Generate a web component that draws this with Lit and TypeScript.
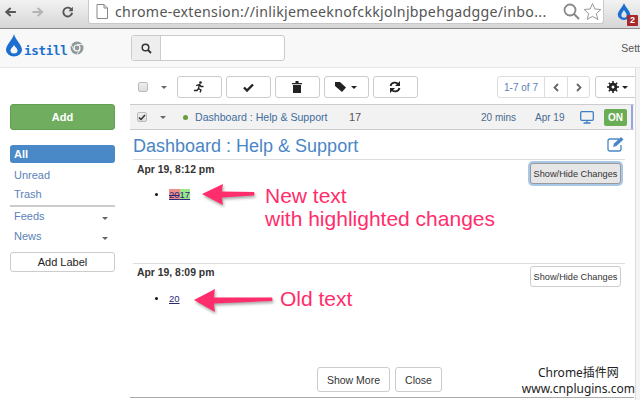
import { LitElement, html, css } from "lit";
import { customElement } from "lit/decorators.js";

const caret = html`<span class="caret"></span>`;

@customElement("app-root")
export class AppRoot extends LitElement {
  static styles = css`
    :host { display: block; position: relative; width: 640px; height: 400px; overflow: hidden; background: #fff;
      font-family: "Liberation Sans", Arial, sans-serif; font-size: 11px; color: #333; }
    * { box-sizing: border-box; }
    svg { display: block; }

    .browser { height: 29px; display: flex; background: linear-gradient(#f2f2f2, #d6d6d6); border-bottom: 1px solid #8a8a8a; align-items: flex-start; }
    .nav { width: 88px; display: flex; padding: 3px 0 0 4px; flex: none; }
    .nav svg { margin-right: 14px; }
    .nav svg:nth-child(2) { margin-right: 16px; }
    .omni { width: 516px; height: 24px; background: #fff; border: 1px solid #c8c8c8; border-top: 0; border-radius: 0 0 3px 3px; display: flex; align-items: center; padding: 0 0 0 7px; flex: none; }
    .url { font-family: "Noto Sans", sans-serif; font-size: 14.2px; color: #555; margin-left: 7px; width: 434px; white-space: nowrap; overflow: hidden; letter-spacing: 0.02em; }
    .omni .mag { margin-left: 14px; }
    .omni .star { margin-left: 3px; }
    .ext { margin: 1px 0 0 12px; position: relative; }
    .badge { position: absolute; left: 11px; top: 14px; width: 11px; height: 11px; background: #a8282c; color: #fff; font: bold 9px/11px "Liberation Sans", sans-serif; text-align: center; border-radius: 1px; }

    .top { height: 39px; background: #f8f8f8; border-bottom: 1px solid #e7e7e7; display: flex; align-items: center; position: relative; }
    .logo { width: 131px; padding-left: 5px; display: flex; align-items: center; flex: none; height: 100%; }
    .drop { margin-top: -6px; }
    .logo-text { font: bold 12.5px "DejaVu Sans Mono", "Liberation Mono", monospace; color: #1a6fd0; margin: 5px 0 0 1px; letter-spacing: -0.3px; width: 46px; }
    .search { width: 154px; height: 26px; display: flex; border: 1px solid #ccc; border-radius: 3px; background: #fff; flex: none; }
    .search .addon { width: 29px; background: #eee; border-right: 1px solid #ccc; display: flex; align-items: center; justify-content: center; border-radius: 3px 0 0 3px; }
    .set { margin-left: auto; white-space: nowrap; color: #555; font-size: 10.5px; }

    .body { display: grid; grid-template-columns: 130px 510px; height: 332px; }
    .side { padding: 36px 15px 0 10px; }
    .btn-add { height: 26px; background: #70ad5e; border: 1px solid #62a04f; border-radius: 3px; color: #fff; font-weight: bold; font-size: 11px; display: flex; align-items: center; justify-content: center; }
    .nav-list { margin-top: 15px; }
    .pill { height: 18px; background: #4a89c8; color: #fff; font-weight: bold; border-radius: 3px; padding-left: 4px; display: flex; align-items: center; }
    .link { height: 19px; color: #5b82b8; padding-left: 4px; display: flex; align-items: center; justify-content: space-between; padding-right: 7px; }
    .first { margin-top: 2px; }
    .side hr { border: 0; height: 2px; background: #ccc; margin: 2px 0 0; }
    .lab { height: 20px; align-items: flex-start; padding-top: 3px; }
    .lab .caret { margin-top: 7px; }
    .btn-label { margin-top: 5px; height: 20px; border: 1px solid #ccc; border-radius: 3px; color: #222; display: flex; align-items: center; justify-content: center; background: #fff; }

    .caret { display: inline-block; width: 0; height: 0; border-left: 3.5px solid transparent; border-right: 3.5px solid transparent; border-top: 3.5px solid #666; }
    .main { position: relative; height: 332px; }
    .tools { height: 22px; margin-top: 8px; display: flex; align-items: center; padding-left: 8px; }
    .cb { width: 10px; height: 10px; border: 1px solid #bbb; border-radius: 2px; background: linear-gradient(#eee, #ddd); display: flex; align-items: center; justify-content: center; flex: none; }
    .tools > .caret { margin: 0 10px 0 13px; }
    .tb { width: 44.5px; height: 22px; border: 1px solid #ccc; border-radius: 3px; background: #fff; display: flex; align-items: center; justify-content: center; gap: 3px; margin-right: 4.5px; flex: none; }
    .tb .caret { border-top-color: #222; }
    .pager { margin-left: 75px; height: 22px; display: flex; border: 1px solid #ddd; border-radius: 3px; color: #5b82b8; font-size: 10px; margin-right: 5px; flex: none; }
    .pager .info { width: 47px; display: flex; align-items: center; justify-content: center; border-right: 1px solid #ddd; }
    .pager .pg { width: 22px; display: flex; align-items: center; justify-content: center; }
    .pager .pg + .pg { border-left: 1px solid #ddd; }

    .row { margin-top: 6px; height: 26px; width: 504px; background: #f2f2f2; border-top: 1px solid #ccc; border-bottom: 1px solid #ccc; display: flex; align-items: center; padding-left: 7px; position: relative; color: #4a6a90; font-size: 10.5px; }
    .row .caret { margin-left: 13px; }
    .dot { width: 5px; height: 5px; border-radius: 50%; background: #6a9a3e; margin-left: 17px; flex: none; }
    .name { margin-left: 7px; width: 154px; font-size: 10.6px; color: #3f6d9c; white-space: nowrap; }
    .count { font-size: 11px; width: 132px; color: #555; }
    .mins { font-size: 10px; width: 54px; }
    .date { font-size: 10px; width: 45px; }
    .on { width: 23px; height: 17px; background: #6aad55; color: #fff; font-weight: bold; font-size: 10px; display: flex; align-items: center; justify-content: center; border-radius: 2px; margin-left: 10px; }
    .stripe { position: absolute; right: 1px; top: 0; bottom: 0; width: 2px; background: #98a4e8; }

    .title { margin-left: 3px; width: 492px; height: 30px; border-bottom: 1px solid #ddd; padding-top: 3px; display: flex; align-items: center; justify-content: space-between; }
    .title h1 { margin: 0; font-weight: normal; font-size: 18px; color: #4a86c5; }
    .title svg { margin-top: -4px; }
    .entry { margin-left: 3px; width: 492px; position: relative; }
    .e1 { height: 104px; border-bottom: 1px solid #ddd; }
    .e2 { height: 103px; }
    .head { display: flex; justify-content: space-between; align-items: flex-start; padding: 3px 4px 0 4px; }
    .head b { color: #333; font-size: 10.4px; margin-top: 1px; }
    .shb { width: 91px; height: 21px; border: 1px solid #ccc; border-radius: 3px; background: #fff; font-size: 9.2px; color: #333; display: flex; align-items: center; justify-content: center; white-space: nowrap; }
    .e2 .head { padding-top: 2px; }
    .shb.focus { background: #e6e6e6; border-color: #999; box-shadow: 0 0 0 2px #a9c8e8; }
    ul { margin: 0; padding: 0; list-style: none; }
    .li { display: flex; align-items: center; margin-top: 5px; padding-left: 22px; font-size: 9.5px; }
    .e2 .li { margin-top: 6px; }
    .li::before { content: ""; width: 3px; height: 3px; background: #111; border-radius: 50%; margin-right: 11px; }
    .val { color: #2b2a7a; text-decoration: underline; display: flex; }
    .del { background: #f0908a; text-decoration: line-through; }
    .ins { background: #9be88a; }
    .foot { display: flex; padding-left: 187px; gap: 5px; }
    .foot div { height: 25px; border: 1px solid #ccc; border-radius: 3px; display: flex; align-items: center; justify-content: center; background: #fff; color: #333; font-size: 10.5px; }
    .more { width: 73px; }
    .close { width: 47px; }
    .baseline { position: absolute; left: 0; top: 329px; width: 504px; height: 1px; background: #aaa; }

    .note { position: absolute; color: #ff2d6b; font-size: 21px; line-height: 23px; white-space: nowrap; }
    .n1 { left: 132px; top: 24px; }
    .n2 { left: 147px; top: 23px; }
    .arrow { position: absolute; }
    .a1 { left: 67px; top: 18px; }
    .a2 { left: 58px; top: 19px; }
    .pink { fill: #ff2d6b; filter: drop-shadow(1px 2px 1.5px rgba(0,0,0,.35)); }
    .water { position: absolute; right: 5px; top: 365px; text-align: center; color: #222; font-family: "Noto Sans", "Noto Sans CJK SC", sans-serif; font-size: 12px; line-height: 16px; white-space: nowrap; }
    .scroll { position: absolute; right: 0; top: 68px; bottom: 0; width: 5px; background: #f4f4f4; border-left: 1px solid #ddd; }
  `;

  render() {
    return html`
      <div class="browser">
        <div class="nav">
          <svg width="18" height="18" viewBox="0 0 18 18"><path d="M16 9H4M9 3.500 3 9l6 5.500" fill="none" stroke="#555" stroke-width="2.600"/></svg>
          <svg width="18" height="18" viewBox="0 0 18 18"><path d="M2 9h12M9 3.500 15 9l-6 5.500" fill="none" stroke="#b4b4b4" stroke-width="2.600"/></svg>
          <svg width="18" height="18" viewBox="0 0 18 18"><path d="M14.500 6.500A6 6 0 1 0 15 10" fill="none" stroke="#555" stroke-width="2.600"/><path d="M16 2v6h-6z" fill="#555"/></svg>
        </div>
        <div class="omni">
          <svg width="12" height="15" viewBox="0 0 12 15"><path d="M1 .5h7l3.500 3.500v10.500H1zM8 .5V4h3.500" fill="#fff" stroke="#888"/></svg>
          <div class="url">chrome-extension://inlikjemeeknofckkjolnjbpehgadgge/inbo...</div>
          <svg class="mag" width="17" height="17" viewBox="0 0 17 17"><circle cx="7" cy="7" r="5.500" fill="none" stroke="#888" stroke-width="1.800"/><path d="m11 11 5 5" stroke="#888" stroke-width="2"/></svg>
          <svg class="star" width="19" height="19" viewBox="0 0 19 19"><path d="m9.500 1.500 2.400 5.500 6 .5-4.600 4 1.500 6-5.300-3.200-5.300 3.200 1.500-6-4.600-4 6-.5z" fill="#fff" stroke="#999"/></svg>
        </div>
        <div class="ext">
          <svg width="16" height="20" viewBox="0 0 18 20"><path d="M9 1C8 5 2 10 2 14a7 6 0 0 0 14 0C16 10 10 5 9 1Zm0 8c1 2 3 4 3 5.500a3 3 0 0 1-6 0C6 13 8 11 9 9Z" fill="#1a6fd0" fill-rule="evenodd"/></svg>
          <div class="badge">2</div>
        </div>
      </div>

      <div class="top">
        <div class="logo">
          <svg class="drop" width="18" height="24" viewBox="0 0 18 24"><path d="M9 1C8 6 1 12 1 17a8 6.500 0 0 0 16 0C17 12 10 6 9 1Zm0 11c1 2 3.500 3.500 3.500 5.500a3.500 3 0 0 1-7 0C5.500 15.500 8 14 9 12Z" fill="#1a6fd0" fill-rule="evenodd"/></svg>
          <span class="logo-text">istill</span>
          <svg width="14" height="14" viewBox="0 0 14 14"><circle cx="7" cy="7" r="6.500" fill="#8f9a9a"/><circle cx="7" cy="7" r="3.500" fill="#fff"/><circle cx="7" cy="7" r="2.400" fill="#8f9a9a"/><path d="M7 3.500H13M4 8.800 1.200 3.800M9.800 9 6.800 13.300" stroke="#fff" stroke-width=".8"/></svg>
        </div>
        <div class="search">
          <div class="addon"><svg width="11" height="11" viewBox="0 0 11 11"><circle cx="4.500" cy="4.500" r="3.300" fill="none" stroke="#333" stroke-width="1.500"/><path d="m7 7 3 3" stroke="#333" stroke-width="1.800"/></svg></div>
        </div>
        <div class="set">Sett</div>
      </div>

      <div class="body">
        <div class="side">
          <div class="btn-add">Add</div>
          <div class="nav-list">
            <div class="pill">All</div>
            <div class="link first">Unread</div>
            <div class="link">Trash</div>
            <hr />
            <div class="link lab">Feeds ${caret}</div>
            <div class="link lab">News ${caret}</div>
            <div class="btn-label">Add Label</div>
          </div>
        </div>

        <div class="main">
          <div class="tools">
            <span class="cb"></span>${caret}
            <div class="tb"><svg width="12" height="12" viewBox="0 0 12 12"><circle cx="7.500" cy="1.500" r="1.300" fill="#222"/><path d="M3 4.500 6.500 3.500 5.500 7.500 8 9 7 11.500M5.500 7.500 4 9.500 1 9.500M6.500 3.500 8 5.500 10.500 5.500" fill="none" stroke="#222" stroke-width="1.300"/></svg></div>
            <div class="tb"><svg width="11" height="9" viewBox="0 0 11 9"><path d="M1 4.500 4 7.500 10 1.500" fill="none" stroke="#222" stroke-width="2.400"/></svg></div>
            <div class="tb"><svg width="10" height="12" viewBox="0 0 10 12"><path d="M0 2h10v1.200H0zM3.500 0h3v2h-3zM1 4h8v8H1z" fill="#222"/></svg></div>
            <div class="tb"><svg width="13" height="10" viewBox="0 0 13 10"><path d="M0 0h5l6 5.500L7 10 0 4z" fill="#222"/></svg>${caret}</div>
            <div class="tb"><svg width="12" height="12" viewBox="0 0 12 12"><path d="M1.500 5A4.500 4.500 0 0 1 9.500 3.500M10.500 7A4.500 4.500 0 0 1 2.500 8.500" fill="none" stroke="#222" stroke-width="1.800"/><path d="M11 0v5H6zM1 12V7h5z" fill="#222"/></svg></div>
            <div class="pager">
              <div class="info">1-7 of 7</div>
              <div class="pg"><svg width="6" height="9" viewBox="0 0 6 9"><path d="M5 1 1.500 4.500 5 8" fill="none" stroke="#666" stroke-width="1.800"/></svg></div>
              <div class="pg"><svg width="6" height="9" viewBox="0 0 6 9"><path d="M1 1l3.500 3.500L1 8" fill="none" stroke="#666" stroke-width="1.800"/></svg></div>
            </div>
            <div class="tb"><svg width="12" height="12" viewBox="0 0 12 12"><circle cx="6" cy="6" r="3.200" fill="none" stroke="#222" stroke-width="2.200"/><path d="M6 0v12M0 6h12M1.800 1.800l8.400 8.400M10.200 1.800l-8.400 8.400" stroke="#222" stroke-width="1.600"/><circle cx="6" cy="6" r="1.500" fill="#fff"/></svg>${caret}</div>
          </div>

          <div class="row">
            <span class="cb"><svg width="8" height="7" viewBox="0 0 8 7"><path d="M1 3.500 3 5.500 7 1" fill="none" stroke="#333" stroke-width="1.500"/></svg></span>
            ${caret}
            <span class="dot"></span>
            <span class="name">Dashboard : Help &amp; Support</span>
            <span class="count">17</span>
            <span class="mins">20 mins</span>
            <span class="date">Apr 19</span>
            <svg width="14" height="13" viewBox="0 0 14 13"><rect x=".7" y=".7" width="12.600" height="8.600" rx="1" fill="none" stroke="#3f7fc0" stroke-width="1.300"/><path d="M7 9.500v2M3.500 12h7" stroke="#3f7fc0" stroke-width="1.300"/></svg>
            <span class="on">ON</span>
            <span class="stripe"></span>
          </div>

          <div class="title">
            <h1>Dashboard : Help &amp; Support</h1>
            <svg width="18" height="16" viewBox="0 0 18 16"><path d="M12 3H3a2 2 0 0 0-2 2v8a2 2 0 0 0 2 2h9a2 2 0 0 0 2-2V9" fill="none" stroke="#4a86c5" stroke-width="1.300"/><path d="M6 11l1-3.500L14 1l2.500 2.500L9.500 10z" fill="#4a86c5"/></svg>
          </div>

          <div class="entry e1">
            <div class="head"><b>Apr 19, 8:12 pm</b><div class="shb focus">Show/Hide Changes</div></div>
            <ul><li class="li"><span class="val"><span class="del">20</span><span class="ins">17</span></span></li></ul>
            <svg class="arrow a1" width="60" height="34" viewBox="0 0 60 34"><path class="pink" d="M2 16 L23 6 Q22 11 22 13.500 L54 14 Q55 16 54 17.500 L22 19.500 Q22 23 23 27 Z"/></svg>
            <div class="note n1">New text<br />with highlighted changes</div>
          </div>

          <div class="entry e2">
            <div class="head"><b>Apr 19, 8:09 pm</b><div class="shb">Show/Hide Changes</div></div>
            <ul><li class="li"><span class="val">20</span></li></ul>
            <svg class="arrow a2" width="86" height="34" viewBox="0 0 86 34"><path class="pink" d="M3 17 L24 6 Q23 12 23 14.500 L81 14.500 Q82 17 81 18 L23 20.500 Q23 24 24 29 Z"/></svg>
            <div class="note n2">Old text</div>
          </div>

          <div class="foot"><div class="more">Show More</div><div class="close">Close</div></div>
          <div class="baseline"></div>
        </div>
      </div>
      <div class="scroll"></div>
      <div class="water">Chrome插件网<br />www.cnplugins.com</div>
    `;
  }
}
